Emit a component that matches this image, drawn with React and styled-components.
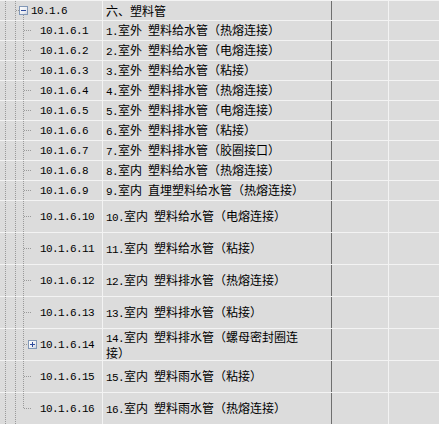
import React from 'react'
import styled, { createGlobalStyle, css } from 'styled-components'

const rows = [
    { code: '10.1.6', name: '六、塑料管', parent: true },
    { code: '10.1.6.1', name: '1.室外 塑料给水管（热熔连接）' },
    { code: '10.1.6.2', name: '2.室外 塑料给水管（电熔连接）' },
    { code: '10.1.6.3', name: '3.室外 塑料给水管（粘接）' },
    { code: '10.1.6.4', name: '4.室外 塑料排水管（热熔连接）' },
    { code: '10.1.6.5', name: '5.室外 塑料排水管（电熔连接）' },
    { code: '10.1.6.6', name: '6.室外 塑料排水管（粘接）' },
    { code: '10.1.6.7', name: '7.室外 塑料排水管（胶圈接口）' },
    { code: '10.1.6.8', name: '8.室内 塑料给水管（热熔连接）' },
    { code: '10.1.6.9', name: '9.室内 直埋塑料给水管（热熔连接）' },
    { code: '10.1.6.10', name: '10.室内 塑料给水管（电熔连接）', tall: true },
    { code: '10.1.6.11', name: '11.室内 塑料给水管（粘接）', tall: true },
    { code: '10.1.6.12', name: '12.室内 塑料排水管（热熔连接）', tall: true },
    { code: '10.1.6.13', name: '13.室内 塑料排水管（粘接）', tall: true },
    { code: '10.1.6.14', name: '14.室内 塑料排水管（螺母密封圈连接）', tall: true, collapsed: true },
    { code: '10.1.6.15', name: '15.室内 塑料雨水管（粘接）', tall: true },
    { code: '10.1.6.16', name: '16.室内 塑料雨水管（热熔连接）', tall: true },
]

const DOT = '#9a9a9a'
const vDots = `repeating-linear-gradient(to bottom, ${DOT} 0 1px, transparent 1px 2px)`
const hDots = `repeating-linear-gradient(to right, ${DOT} 0 1px, transparent 1px 2px)`

const GlobalStyle = createGlobalStyle`
    html, body {
        margin: 0;
        background: #dcdcdc;
    }
    body {
        font-family: "Noto Sans CJK SC", "Liberation Sans", sans-serif;
        font-size: 12px;
        color: #000;
    }
`

// splits ascii runs so they get half-width (6px) advance like the bitmap font
function Mixed({ text }) {
    return text.split(/([\x00-\x7f]+)/).filter(Boolean).map((part, i) =>
        /^[\x00-\x7f]+$/.test(part) ? <Half key={i}>{part}</Half> : <span key={i}>{part}</span>
    )
}

export default function App() {
    const last = rows.length - 1
    return (
        <>
            <GlobalStyle />
            <Grid>
                {rows.map((r, i) => (
                    <Row key={r.code} $tall={r.tall}>
                        <TreeCell>
                            <Branch $w={10} $x={5} />
                            {r.parent ? (
                                <>
                                    <Branch $w={9} $x={5} $stub />
                                    <ToggleSlot $down>
                                        <Box $open />
                                    </ToggleSlot>
                                </>
                            ) : (
                                <>
                                    <Branch $w={10} $x={5} />
                                    <Branch $w={8} $x={3} $stub $end={i === last} />
                                    <ToggleSlot $stub={!r.collapsed}>
                                        {r.collapsed && <Box />}
                                    </ToggleSlot>
                                </>
                            )}
                            <Code>{r.code}</Code>
                        </TreeCell>
                        <NameCell>
                            <Name><Mixed text={r.name} /></Name>
                        </NameCell>
                        <EmptyCell />
                        <RestCell />
                    </Row>
                ))}
            </Grid>
        </>
    )
}

const Grid = styled.div`
    display: flex;
    flex-direction: column;
    width: 439px;
    height: 424px;
    overflow: hidden;
`

const Row = styled.div`
    display: flex;
    flex: none;
    height: ${p => (p.$tall ? 32 : 20)}px;
    box-sizing: border-box;
    border-top: 1px solid #f3f3f3;
`

const Cell = styled.div`
    box-sizing: border-box;
    display: flex;
    align-items: center;
    border-right: 1px solid #f3f3f3;
`

const TreeCell = styled(Cell)`
    width: 103px;
    align-items: stretch;
`

const Branch = styled.span`
    flex: none;
    width: ${p => p.$w}px;
    background-image: ${vDots}${p => (p.$stub ? `, ${hDots}` : '')};
    background-repeat: no-repeat;
    background-size: 1px ${p => (p.$end ? '50%' : '100%')}${p => (p.$stub ? `, ${p.$w - p.$x - 1}px 1px` : '')};
    background-position: ${p => p.$x}px 0${p => (p.$stub ? `, ${p.$x + 1}px 50%` : '')};
`

const ToggleSlot = styled.span`
    flex: none;
    width: 9px;
    margin-right: 3px;
    display: flex;
    align-items: center;
    ${p => p.$down && css`
        background: ${vDots} 4px 100% / 1px 50% no-repeat;
    `}
    ${p => p.$stub && css`
        background: ${hDots} 0 50% / 4px 1px no-repeat;
    `}
`

const Box = styled.span`
    position: relative;
    box-sizing: border-box;
    width: 9px;
    height: 9px;
    border: 1px solid #8197b6;
    background: linear-gradient(135deg, #ffffff 0%, #e6e9ef 70%, #c9cfdb 100%);

    &::before {
        content: "";
        position: absolute;
        left: 1px;
        top: 3px;
        width: 5px;
        height: 1px;
        background: #2d4a9c;
    }

    ${p => !p.$open && css`
        &::after {
            content: "";
            position: absolute;
            left: 3px;
            top: 1px;
            width: 1px;
            height: 5px;
            background: #2d4a9c;
        }
    `}
`

const Code = styled.span`
    align-self: center;
    font-family: "Liberation Mono", monospace;
    font-size: 11px;
    letter-spacing: -0.6px;
    white-space: nowrap;
`

const NameCell = styled(Cell)`
    width: 229px;
    padding: 0 24px 0 3px;
    border-right-color: #6f6f6f;
`

const Name = styled.div`
    line-height: 14px;
    width: 100%;
`

const Half = styled.span`
    font-family: "Liberation Mono", monospace;
    font-size: 11px;
    letter-spacing: -0.6px;
    white-space: pre;
`

const EmptyCell = styled(Cell)`
    width: 57px;
`

const RestCell = styled(Cell)`
    flex: 1;
    border-right: none;
`
